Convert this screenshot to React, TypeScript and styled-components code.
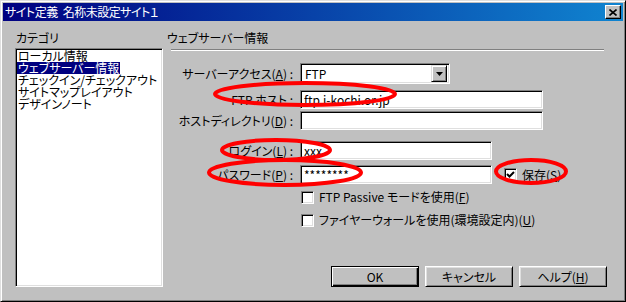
import React from 'react';
import styled, {createGlobalStyle} from 'styled-components';

const GlobalStyle = createGlobalStyle`
  html, body {
    margin: 0;
    padding: 0;
    background: #c0c0c0;
  }
  body {
    font-family: "Noto Sans CJK JP", "Noto Sans", sans-serif;
    font-size: 12px;
    font-feature-settings: "palt";
    color: #000;
  }
`

const Window = styled.div`
  position: relative;
  box-sizing: border-box;
  width: 626px;
  height: 302px;
  background: #c0c0c0;
  border: 1px solid;
  border-color: #dfdfdf #000 #000 #dfdfdf;
  box-shadow: inset 1px 1px #fff, inset -1px -1px #808080;
  padding: 2px;
  display: flex;
  flex-direction: column;
`

const TitleBar = styled.div`
  height: 18px;
  flex: none;
  display: flex;
  align-items: center;
  justify-content: space-between;
  padding: 0 2px 0 2px;
  background: linear-gradient(to right, #000080, #1084d0);
  color: #fff;
  line-height: 18px;
`

const TitleText = styled.div`
  display: flex;
  gap: 5px;
  letter-spacing: -0.5px;
  white-space: nowrap;
`

const CloseButton = styled.div`
  box-sizing: border-box;
  width: 16px;
  height: 14px;
  background: #c0c0c0;
  border: 1px solid;
  border-color: #fff #000 #000 #fff;
  box-shadow: inset -1px -1px #808080;
  display: flex;
  align-items: center;
  justify-content: center;
`

const Body = styled.div`
  flex: 1;
  display: flex;
  gap: 4px;
  padding: 10px 0 12px 12px;
`

const LeftColumn = styled.div`
  width: 148px;
  display: flex;
  flex-direction: column;
`

const RightColumn = styled.div`
  width: 440px;
  display: flex;
  flex-direction: column;
`

const Caption = styled.div<{ $indent?: number }>`
  line-height: 14px;
  padding-left: ${p => p.$indent ?? 0}px;
  white-space: nowrap;
`

const ListBox = styled.div`
  flex: 1;
  margin-top: 3px;
  background: #fff;
  border: 1px solid;
  border-color: #808080 #fff #fff #808080;
  box-shadow: inset 1px 1px #000, inset -1px -1px #dfdfdf;
  padding: 1px 1px;
`

const ListItem = styled.div<{ $selected?: boolean }>`
  line-height: 12px;
  height: 12px;
  white-space: nowrap;

  span {
    display: inline-block;
    height: 12px;
    padding: 0 1px;
    background: ${p => p.$selected ? '#000080' : 'transparent'};
    color: ${p => p.$selected ? '#fff' : '#000'};
  }
`

const Divider = styled.div`
  margin: 4px 3px 0 4px;
  border-top: 1px solid #808080;
  border-bottom: 1px solid #fff;
`

const Form = styled.div`
  margin-top: 12px;
  display: flex;
  flex-direction: column;
`

const Row = styled.div<{ $mt?: number }>`
  display: flex;
  align-items: center;
  margin-top: ${p => p.$mt ?? 0}px;
`

const Label = styled.div`
  width: 126px;
  flex: none;
  text-align: right;
  white-space: nowrap;
  margin-right: 7px;
  line-height: 14px;
`

const Sunken = styled.div`
  box-sizing: border-box;
  background: #fff;
  border: 1px solid;
  border-color: #808080 #fff #fff #808080;
  box-shadow: inset 1px 1px #000, inset -1px -1px #dfdfdf;
`

const TextField = styled(Sunken)<{ $w: number }>`
  width: ${p => p.$w}px;
  height: 19px;
  padding: 0 3px;
  line-height: 17px;
  white-space: nowrap;
  overflow: hidden;
`

const Combo = styled(Sunken)`
  width: 150px;
  height: 21px;
  display: flex;
  align-items: center;
  justify-content: space-between;
  padding: 2px 2px 2px 4px;
`

const DropButton = styled.div`
  box-sizing: border-box;
  width: 16px;
  height: 17px;
  background: #c0c0c0;
  border: 1px solid;
  border-color: #dfdfdf #000 #000 #dfdfdf;
  box-shadow: inset 1px 1px #fff, inset -1px -1px #808080;
  display: flex;
  align-items: center;
  justify-content: center;
`

const CheckRow = styled.div<{ $mt?: number; $ml?: number }>`
  display: flex;
  align-items: center;
  gap: 5px;
  margin: ${p => p.$mt ?? 0}px 0 0 ${p => p.$ml ?? 0}px;
  white-space: nowrap;
  line-height: 14px;
`

const CheckBox = styled(Sunken)`
  width: 13px;
  height: 13px;
  flex: none;
  display: flex;
  align-items: center;
  justify-content: center;
`

const ButtonBar = styled.div`
  margin-top: auto;
  display: flex;
  justify-content: flex-end;
  gap: 6px;
`

const Button = styled.div<{ $default?: boolean }>`
  box-sizing: border-box;
  width: 88px;
  height: 21px;
  background: #c0c0c0;
  display: flex;
  align-items: center;
  justify-content: center;
  border: 1px solid;
  border-color: ${p => p.$default ? '#000' : '#fff #000 #000 #fff'};
  box-shadow: ${p => p.$default
    ? 'inset 1px 1px #fff, inset -1px -1px #000, inset -2px -2px #808080'
    : 'inset 1px 1px #dfdfdf, inset -1px -1px #808080'};
`

// red marker ellipses drawn over the dialog
const Marks = styled.svg`
  position: absolute;
  top: -1px;
  left: -1px;
  pointer-events: none;
`

const Check = () => (
    <svg width="9" height="9" viewBox="0 0 9 9">
        <path d="M1 4 L3.5 6.5 L8 2" fill="none" stroke="#000" strokeWidth="2"/>
    </svg>
)

const categories = [
    'ローカル情報',
    'ウェブサーバー情報',
    'チェックイン/チェックアウト',
    'サイトマップレイアウト',
    'デザインノート',
]

export default function App() {
    return (
        <>
            <GlobalStyle/>
            <Window>
                <TitleBar>
                    <TitleText>
                        <span>サイト定義</span>
                        <span>名称未設定サイト１</span>
                    </TitleText>
                    <CloseButton>
                        <svg width="8" height="7" viewBox="0 0 8 7">
                            <path d="M0.5 0.5 L7.5 6.5 M7.5 0.5 L0.5 6.5" stroke="#000" strokeWidth="1.6"/>
                        </svg>
                    </CloseButton>
                </TitleBar>
                <Body>
                    <LeftColumn>
                        <Caption $indent={1}>カテゴリ</Caption>
                        <ListBox>
                            {categories.map((c, i) => (
                                <ListItem key={c} $selected={i === 1}><span>{c}</span></ListItem>
                            ))}
                        </ListBox>
                    </LeftColumn>
                    <RightColumn>
                        <Caption>ウェブサーバー情報</Caption>
                        <Divider/>
                        <Form>
                            <Row>
                                <Label>サーバーアクセス(<u>A</u>) :</Label>
                                <Combo>
                                    <span>FTP</span>
                                    <DropButton>
                                        <svg width="7" height="4" viewBox="0 0 7 4">
                                            <path d="M0 0 H7 L3.5 4 Z" fill="#000"/>
                                        </svg>
                                    </DropButton>
                                </Combo>
                            </Row>
                            <Row $mt={6}>
                                <Label>FTP ホスト :</Label>
                                <TextField $w={243}>ftp.i-kochi.or.jp</TextField>
                            </Row>
                            <Row $mt={2}>
                                <Label>ホストディレクトリ(<u>D</u>) :</Label>
                                <TextField $w={243}/>
                            </Row>
                            <Row $mt={11}>
                                <Label>ログイン(<u>L</u>) :</Label>
                                <TextField $w={192}>xxx</TextField>
                            </Row>
                            <Row $mt={5}>
                                <Label>パスワード(<u>P</u>) :</Label>
                                <TextField $w={192}>********</TextField>
                                <CheckRow $ml={12}>
                                    <CheckBox><Check/></CheckBox>
                                    <span>保存(<u>S</u>)</span>
                                </CheckRow>
                            </Row>
                            <CheckRow $mt={6} $ml={134}>
                                <CheckBox/>
                                <span>FTP Passive モードを使用(<u>F</u>)</span>
                            </CheckRow>
                            <CheckRow $mt={9} $ml={134}>
                                <CheckBox/>
                                <span>ファイヤーウォールを使用(環境設定内)(<u>U</u>)</span>
                            </CheckRow>
                        </Form>
                        <ButtonBar>
                            <Button $default>OK</Button>
                            <Button>キャンセル</Button>
                            <Button>ヘルプ(<u>H</u>)</Button>
                        </ButtonBar>
                    </RightColumn>
                </Body>
                <Marks width="626" height="302" viewBox="0 0 626 302">
                    <g fill="none" stroke="#f00" strokeWidth="4">
                        <ellipse cx="305" cy="94" rx="90" ry="11"/>
                        <ellipse cx="276" cy="150" rx="54" ry="10"/>
                        <ellipse cx="285" cy="172.5" rx="76" ry="12.5"/>
                        <ellipse cx="531" cy="171.5" rx="35" ry="11.5"/>
                    </g>
                </Marks>
            </Window>
        </>
    )
}
